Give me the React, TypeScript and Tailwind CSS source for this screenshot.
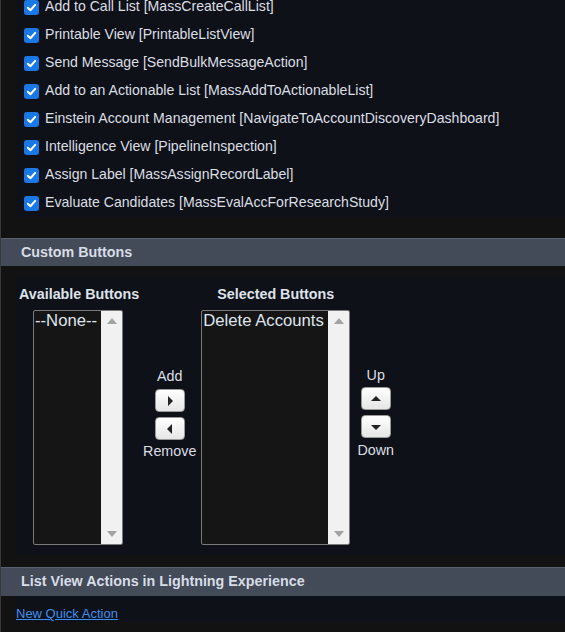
import React from "react";

const actions = [
  "Add to Call List [MassCreateCallList]",
  "Printable View [PrintableListView]",
  "Send Message [SendBulkMessageAction]",
  "Add to an Actionable List [MassAddToActionableList]",
  "Einstein Account Management [NavigateToAccountDiscoveryDashboard]",
  "Intelligence View [PipelineInspection]",
  "Assign Label [MassAssignRecordLabel]",
  "Evaluate Candidates [MassEvalAccForResearchStudy]",
];

function Check() {
  return (
    <span className="flex h-[15px] w-[15px] shrink-0 items-center justify-center rounded-[3px] bg-[#1a78e6]">
      <svg width="11" height="11" viewBox="0 0 12 12">
        <path d="M2 6.3 L4.8 9 L10 3.2" fill="none" stroke="#fff" strokeWidth="2.2" strokeLinecap="round" strokeLinejoin="round" />
      </svg>
    </span>
  );
}

function ListBox({ width, item }: { width: string; item: string }) {
  return (
    <div className={`flex h-[235px] ${width} overflow-hidden rounded-[2px] border border-[#7a7a7a] bg-[#151515]`}>
      <div className="flex-1 whitespace-nowrap pl-[1px] text-[16.7px] leading-[20px] text-[#dfe6ee]">{item}</div>
      <div className="flex w-[21px] shrink-0 flex-col items-center justify-between bg-[#f1f1f1] py-[7px]">
        <svg width="10" height="6" viewBox="0 0 10 6"><path d="M0 6 L5 0 L10 6 Z" fill="#a3a3a3" /></svg>
        <svg width="10" height="6" viewBox="0 0 10 6"><path d="M0 0 L5 6 L10 0 Z" fill="#a3a3a3" /></svg>
      </div>
    </div>
  );
}

function ArrowBtn({ dir }: { dir: "left" | "right" | "up" | "down" }) {
  const d = {
    right: "M3 0 L8 5 L3 10 Z",
    left: "M7 0 L2 5 L7 10 Z",
    up: "M0 7 L5 2 L10 7 Z",
    down: "M0 3 L5 8 L10 3 Z",
  }[dir];
  const vertical = dir === "up" || dir === "down";
  return (
    <div className="flex h-[23px] w-[30px] items-center justify-center rounded-[4px] border border-[#9a9a9a] bg-gradient-to-b from-[#ffffff] to-[#e6e6e6]">
      <svg width={vertical ? 14 : 10} height={10} viewBox={vertical ? "-2 0 14 10" : "0 0 10 10"}>
        <path d={d} fill="#222" />
      </svg>
    </div>
  );
}

export default function App() {
  return (
    <div
      className="h-[632px] w-[565px] overflow-hidden border-l border-[#3a3a3a] bg-[#121212] text-[14px] text-[#dcdfe4]"
      style={{ fontFamily: '"Liberation Sans", Arial, sans-serif' }}
    >
      <div className="-mt-[7px] ml-[15px] bg-[#0e1118] px-[8px]">
        {actions.map((a) => (
          <div key={a} className="flex h-[28px] items-center gap-[6px] whitespace-nowrap">
            <Check />
            <span className="text-[14.1px]">{a}</span>
          </div>
        ))}
      </div>

      <div className="mt-[21px] h-[28px] border-t border-[#5a6070] bg-[#434a58] pl-[20px] text-[14.3px] font-bold leading-[26px] text-[#d7dde6]">
        Custom Buttons
      </div>

      <div className="ml-[15px] mt-[10px] flex h-[279px] bg-[#0e1118] pl-[3px] pt-[10px]">
        <div className="flex flex-col items-start">
          <div className="whitespace-nowrap text-[14.3px] font-bold leading-[16px] text-[#dfe3ea]">Available Buttons</div>
          <div className="ml-[14px] mt-[8px]">
            <ListBox width="w-[90px]" item="--None--" />
          </div>
        </div>
        <div className="ml-[4px] flex w-[53px] flex-col items-center pt-[83px] text-[14.3px]">
          <div className="leading-[15px]">Add</div>
          <div className="mt-[5px]"><ArrowBtn dir="right" /></div>
          <div className="mt-[5px]"><ArrowBtn dir="left" /></div>
          <div className="mt-[4px] leading-[15px]">Remove</div>
        </div>
        <div className="ml-[5px] flex w-[149px] flex-col items-center">
          <div className="whitespace-nowrap text-[14.3px] font-bold leading-[16px] text-[#dfe3ea]">Selected Buttons</div>
          <div className="mt-[8px]">
            <ListBox width="w-[149px]" item="Delete Accounts" />
          </div>
        </div>
        <div className="ml-[7px] flex w-[37px] flex-col items-center pt-[82px] text-[14.3px]">
          <div className="leading-[15px]">Up</div>
          <div className="mt-[4px]"><ArrowBtn dir="up" /></div>
          <div className="mt-[5px]"><ArrowBtn dir="down" /></div>
          <div className="mt-[5px] leading-[15px]">Down</div>
        </div>
      </div>

      <div className="mt-[12px] h-[29px] border-t border-[#5a6070] bg-[#434a58] pl-[20px] text-[14.3px] font-bold leading-[27px] text-[#d7dde6]">
        List View Actions in Lightning Experience
      </div>

      <div className="ml-[14px] h-[26px] bg-[#0e1118] pl-[1px] pt-[7px]">
        <a href="#" className="text-[13px] leading-[15px] text-[#3d8ff0] underline">
          New Quick Action
        </a>
      </div>
    </div>
  );
}
